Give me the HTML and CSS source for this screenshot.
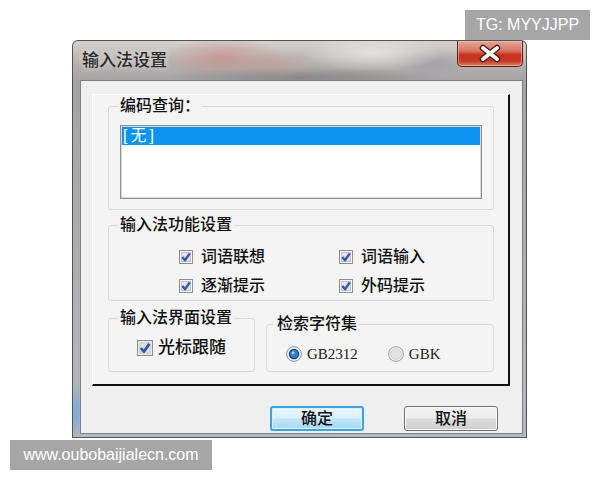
FILE: index.html
```html
<!DOCTYPE html>
<html lang="zh-CN">
<head>
  <meta charset="UTF-8">
  <title>输入法设置</title>
  <link rel="stylesheet" href="styles.css">
</head>
<body>

  <div class="tag tag-top">TG: MYYJJPP</div>

  <div class="window">
    <div class="titlebar">
      <span class="caption">输入法设置</span>
      <button class="close">
        <svg width="64" height="25" viewBox="0 0 64 25">
          <path d="M25 7 L39 18 M39 7 L25 18" stroke="#4a1a14" stroke-width="6.4" stroke-linecap="round"/>
          <path d="M25 7 L39 18 M39 7 L25 18" stroke="#ffffff" stroke-width="3.8" stroke-linecap="round"/>
        </svg>
      </button>
    </div>

    <div class="client">
      <div class="panel">
        <fieldset class="group">
          <legend>编码查询：</legend>
          <div class="listbox">
            <div class="item selected">[无]</div>
          </div>
        </fieldset>

        <fieldset class="group">
          <legend>输入法功能设置</legend>
          <div class="options">
            <label class="check"><svg class="box"><use href="#cb"/></svg>词语联想</label>
            <label class="check"><svg class="box"><use href="#cb"/></svg>词语输入</label>
            <label class="check"><svg class="box"><use href="#cb"/></svg>逐渐提示</label>
            <label class="check"><svg class="box"><use href="#cb"/></svg>外码提示</label>
          </div>
        </fieldset>

        <div class="group-row">
          <fieldset class="group ui-group">
            <legend>输入法界面设置</legend>
            <div class="single">
              <label class="check big"><svg class="box"><use href="#cb"/></svg>光标跟随</label>
            </div>
          </fieldset>
          <fieldset class="group charset">
            <legend>检索字符集</legend>
            <div class="radios">
              <label class="radio"><svg class="dot"><use href="#rb-on"/></svg>GB2312</label>
              <label class="radio"><svg class="dot"><use href="#rb-off"/></svg>GBK</label>
            </div>
          </fieldset>
        </div>
      </div>

      <div class="buttons">
        <button class="btn btn-ok">确定</button>
        <button class="btn">取消</button>
      </div>
    </div>
  </div>

  <div class="tag tag-bottom">www.oubobaijialecn.com</div>

  <!-- shared checkbox / radio glyphs -->
  <svg class="defs" width="0" height="0">
    <symbol id="cb" viewBox="0 0 14 14">
      <rect x="0.5" y="0.5" width="13" height="13" fill="#f7f7f7" stroke="#8e8f8f"/>
      <rect x="2.5" y="2.5" width="9" height="9" fill="#dfe3ee" stroke="#c0c6d2"/>
      <path d="M3.4 7 L6 10.2 L10.8 3.4" fill="none" stroke="#3a56a8" stroke-width="2.4" stroke-linejoin="round"/>
    </symbol>
    <symbol id="rb-on" viewBox="0 0 16 16">
      <circle cx="8" cy="8" r="7.4" fill="#f2f2f2" stroke="#8e8f8f"/>
      <circle cx="8" cy="8" r="4.6" fill="#2a7fd4" stroke="#133e6e" stroke-width="1.2"/>
      <circle cx="7" cy="6.8" r="1.6" fill="#9fd0f7"/>
    </symbol>
    <symbol id="rb-off" viewBox="0 0 16 16">
      <circle cx="8" cy="8" r="7.4" fill="#f4f4f4" stroke="#9a9b9b"/>
      <circle cx="8" cy="8" r="5.4" fill="#e3e3e3" stroke="#d2d2d2"/>
    </symbol>
  </svg>

</body>
</html>
```

FILE: styles.css
```css
body {
  margin: 0;
  background: #ffffff;
  font-family: "Liberation Sans", "Noto Sans CJK SC", sans-serif;
  color: #111;
}

.tag {
  position: absolute;
  height: 30px;
  line-height: 30px;
  background: #a6a6a6;
  color: #fff;
  font-size: 16px;
  text-align: center;
}

.tag-top {
  top: 10px;
  right: 10px;
  width: 125px;
}

.tag-bottom {
  top: 440px;
  left: 10px;
  width: 202px;
}

/* window frame with the blurred aero glass look */
.window {
  box-sizing: border-box;
  width: 455px;
  height: 398px;
  margin: 40px 0 0 72px;
  border: 1px solid rgba(50, 50, 50, 0.75);
  border-radius: 6px 6px 0 0;
  background:
    radial-gradient(ellipse 60px 20px at 150px 16px, rgba(205, 125, 118, 0.55), transparent),
    radial-gradient(ellipse 40px 16px at 205px 24px, rgba(190, 150, 140, 0.5), transparent),
    radial-gradient(ellipse 140px 10px at 230px 36px, rgba(95, 95, 100, 0.45), transparent),
    radial-gradient(ellipse 70px 18px at 300px 12px, rgba(238, 235, 232, 0.75), transparent),
    radial-gradient(ellipse 40px 14px at 360px 22px, rgba(130, 140, 155, 0.4), transparent),
    radial-gradient(ellipse 8px 30px at 3px 370px, rgba(110, 165, 220, 0.85), transparent),
    linear-gradient(180deg, #d4d1cf 0, #b6b2b0 22px, #a5a3a4 40px, #b6b9bd 100%);
  display: flex;
  flex-direction: column;
}

.titlebar {
  height: 39px;
  display: flex;
  justify-content: space-between;
  align-items: flex-start;
}

.caption {
  margin: 11px 0 0 9px;
  font-size: 17px;
  font-weight: 500;
  line-height: 18px;
  color: #2a2a2a;
  text-shadow: 0 0 6px rgba(255, 255, 255, 0.7);
}

.close {
  width: 66px;
  height: 26px;
  margin-right: 3px;
  padding: 0;
  border: 1px solid #5b2219;
  border-top: none;
  border-radius: 0 0 5px 5px;
  background: linear-gradient(180deg, #e7a89b 0, #d8735f 40%, #c9321d 55%, #c63a24 80%, #e0806a 100%);
  box-shadow: inset 0 0 0 1px rgba(255, 200, 190, 0.5);
}

.close svg {
  display: block;
}

.client {
  flex: 1;
  margin: 0 3px 3px 7px;
  border: 1px solid #7d8288;
  background: #efefef;
}

.panel {
  margin: 13px 0 0 11px;
  width: 418px;
  box-sizing: border-box;
  padding: 2px 14px 12px 15px;
  background: #f4f4f4;
  border-top: 1px solid #ffffff;
  border-left: 1px solid #ffffff;
  border-right: 2px solid #111;
  border-bottom: 2px solid #111;
  font-weight: 500;
}

.group {
  margin: 0;
  padding: 0 11px;
  border: 1px solid #d6d9dc;
  border-radius: 3px;
  min-inline-size: 0;
}

.group + .group {
  margin-top: 6px;
}

.group legend {
  padding: 0 2px;
  margin-left: -2px;
  font-size: 16px;
  line-height: 18px;
  color: #111;
}

.listbox {
  margin: 10px 0;
  height: 74px;
  box-sizing: border-box;
  border: 1px solid #8d9196;
  box-shadow: inset 0 0 0 1px #d8d8d8;
  background: #fff;
  padding: 1px;
}

.item {
  height: 18px;
  line-height: 18px;
  font-size: 16px;
  padding-left: 1px;
  font-weight: 400;
  letter-spacing: 3px;
}

.item.selected {
  background: #0c93f2;
  color: #fff;
}

.options {
  display: grid;
  grid-template-columns: 160px 1fr;
  grid-auto-rows: 29px;
  padding: 8px 0 0 59px;
}

.check {
  display: flex;
  align-items: center;
  gap: 8px;
  font-size: 16px;
  line-height: 18px;
}

.check .box {
  width: 14px;
  height: 14px;
  flex: none;
}

.check.big {
  gap: 5px;
  font-size: 17px;
}

.check.big .box {
  width: 16px;
  height: 16px;
}

.group-row {
  display: flex;
  gap: 11px;
  margin-top: 8px;
}

.ui-group {
  flex: none;
  width: 147px;
  box-sizing: border-box;
}

.charset {
  flex: 1;
  padding-left: 10px;
}

.single,
.radios {
  height: 24px;
  display: flex;
  align-items: center;
  padding: 9px 0 5px;
}

.single {
  padding-left: 17px;
}

.radios {
  padding-left: 9px;
  gap: 30px;
}

.radio {
  display: flex;
  align-items: center;
  gap: 5px;
  font-family: "Liberation Serif", "Noto Sans CJK SC", serif;
  font-size: 15px;
  font-weight: 400;
  color: #222;
}

.radio .dot {
  width: 16px;
  height: 16px;
  flex: none;
}

.buttons {
  display: flex;
  justify-content: flex-end;
  gap: 40px;
  margin-top: 20px;
  padding-right: 24px;
}

.btn {
  width: 94px;
  height: 25px;
  box-sizing: border-box;
  padding: 0;
  border: 1px solid #707070;
  border-radius: 3px;
  background: linear-gradient(180deg, #f3f3f3 0, #ebebeb 48%, #dcdcdc 52%, #cfcfcf 100%);
  box-shadow: inset 0 0 0 1px #fbfbfb;
  font-family: "Liberation Sans", "Noto Sans CJK SC", sans-serif;
  font-size: 16px;
  font-weight: 500;
  line-height: 20px;
  color: #111;
}

.btn-ok {
  border: 2px solid #3ea3da;
  background: linear-gradient(180deg, #eaf6fd 0, #d9f0fc 48%, #bfe5fb 52%, #a9daf5 100%);
  box-shadow: inset 0 0 0 1px #d6f0fc;
}

.defs {
  position: absolute;
  width: 0;
  height: 0;
  overflow: hidden;
}
```
